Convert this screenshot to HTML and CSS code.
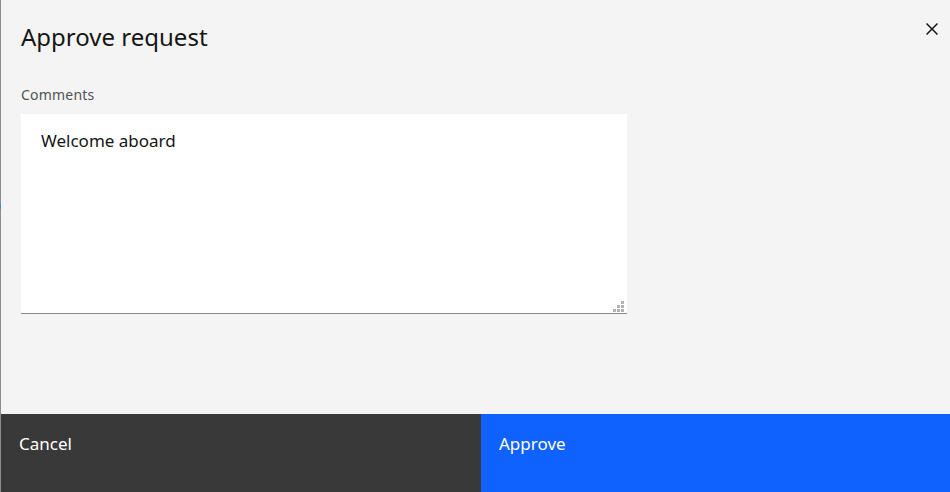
FILE: index.html
```html
<!DOCTYPE html>
<html>
<head>
<meta charset="utf-8">
<link rel="stylesheet" href="styles.css">
</head>
<body>
<div class="page">
  <div class="backdrop"><span class="backdrop-mark"></span></div>
  <div class="modal">
    <div class="modal-body">
      <div class="modal-header">
        <h2 class="modal-title">Approve request</h2>
        <button class="close" aria-label="Close">
          <svg width="24" height="24" viewBox="0 0 32 32"><path d="M24 9.4L22.6 8 16 14.6 9.4 8 8 9.4 14.6 16 8 22.6 9.4 24 16 17.4 22.6 24 24 22.6 17.4 16 24 9.4z" fill="#161616"/></svg>
        </button>
      </div>
      <label class="field-label">Comments</label>
      <div class="textarea">
        <span class="textarea-text">Welcome aboard</span>
        <svg class="grip" width="11" height="11" viewBox="0 0 11 11">
          <rect x="8" y="0" width="3" height="3" fill="#b3b3b3"/>
          <rect x="4" y="4" width="3" height="3" fill="#b3b3b3"/>
          <rect x="8" y="4" width="3" height="3" fill="#b3b3b3"/>
          <rect x="0" y="8" width="3" height="3" fill="#b3b3b3"/>
          <rect x="4" y="8" width="3" height="3" fill="#b3b3b3"/>
          <rect x="8" y="8" width="3" height="3" fill="#b3b3b3"/>
        </svg>
      </div>
    </div>
    <div class="modal-footer">
      <button class="btn btn-secondary">Cancel</button>
      <button class="btn btn-primary">Approve</button>
    </div>
  </div>
</div>
</body>
</html>
```
FILE: styles.css
```css
* { box-sizing: border-box; }
html, body { margin: 0; padding: 0; }
body {
  width: 950px;
  height: 492px;
  overflow: hidden;
  font-family: "Noto Sans", "Liberation Sans", sans-serif;
  color: #161616;
}
.page {
  display: flex;
  width: 950px;
  height: 492px;
}
.backdrop {
  width: 1px;
  background: #8d8d8d;
  position: relative;
}
.backdrop-mark {
  position: absolute;
  left: 0;
  top: 204px;
  width: 1px;
  height: 5px;
  background: #4589c8;
}
.modal {
  flex: 1;
  display: flex;
  flex-direction: column;
  background: #f4f4f4;
}
.modal-body {
  flex: 1;
  padding: 0 0 0 20px;
}
.modal-header {
  display: flex;
  justify-content: space-between;
  align-items: flex-start;
  padding-top: 21px;
}
.modal-title {
  margin: 0;
  font-size: 24px;
  line-height: 32px;
  font-weight: 400;
  letter-spacing: 0;
}
.close {
  border: 0;
  background: transparent;
  padding: 0;
  margin: 0;
  width: 24px;
  height: 24px;
  margin-top: -4px;
  margin-right: 6px;
  display: flex;
}
.field-label {
  display: block;
  margin-top: 33px;
  font-size: 14px;
  line-height: 18px;
  color: #525252;
  letter-spacing: 0.2px;
}
.textarea {
  position: relative;
  margin-top: 10px;
  width: 606px;
  height: 200px;
  background: #ffffff;
  border-bottom: 1px solid #8d8d8d;
  padding: 16px 20px;
}
.textarea-text {
  font-size: 17px;
  line-height: 22px;
  color: #161616;
}
.grip {
  position: absolute;
  right: 3px;
  bottom: 1px;
}
.modal-footer {
  display: flex;
  height: 78px;
}
.btn {
  border: 0;
  margin: 0;
  font-family: inherit;
  font-size: 17px;
  text-align: left;
  color: #ffffff;
  padding: 18px 18px;
  display: flex;
  align-items: flex-start;
  line-height: 24px;
}
.btn-secondary {
  width: 480px;
  background: #393939;
}
.btn-primary {
  flex: 1;
  background: #0f62fe;
}
```
